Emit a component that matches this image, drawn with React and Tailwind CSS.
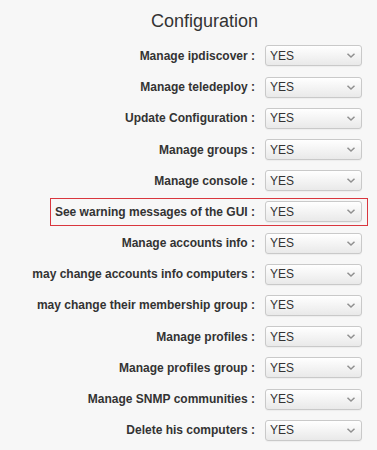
const rows = [
  "Manage ipdiscover :",
  "Manage teledeploy :",
  "Update Configuration :",
  "Manage groups :",
  "Manage console :",
  "See warning messages of the GUI :",
  "Manage accounts info :",
  "may change accounts info computers :",
  "may change their membership group :",
  "Manage profiles :",
  "Manage profiles group :",
  "Manage SNMP communities :",
  "Delete his computers :",
];

function Chevron() {
  return (
    <svg width="10" height="7" viewBox="0 0 10 7" className="shrink-0">
      <path d="M1.5 1.8 L5 5 L8.5 1.8" fill="none" stroke="#909090" strokeWidth="1.5" />
    </svg>
  );
}

function FakeSelect() {
  return (
    <div className="w-[97px] h-[21px] shrink-0 flex items-center justify-between pl-[4px] pr-[5px] border border-[#c9c9c9] rounded-[3px] bg-linear-to-b from-white to-[#e9e9e9] shadow-[0_1px_1px_rgba(0,0,0,0.04)] text-[12px] text-[#333]">
      <span>YES</span>
      <Chevron />
    </div>
  );
}

export default function App() {
  return (
    <div className="w-full h-[450px] overflow-hidden bg-[#f7f7f7] text-[#333] font-['Liberation_Sans',Arial,sans-serif]">
      <div className="ml-[50px] w-[309px] pt-[10px] text-center text-[18px] leading-[22px]">
        Configuration
      </div>

      <div className="mt-[8.4px] ml-[50px] w-[318px]">
        {rows.map((label, i) => (
          <div key={label} className="h-[31.2px] flex items-center">
            <div
              className={
                "w-full h-[28px] flex items-center justify-end pr-[5px] border " +
                (i === 5 ? "border-[#d9363e]" : "border-transparent")
              }
            >
              <span className="shrink-0 whitespace-nowrap font-bold text-[12px] mr-[10px]">
                {label}
              </span>
              <FakeSelect />
            </div>
          </div>
        ))}
      </div>
    </div>
  );
}
